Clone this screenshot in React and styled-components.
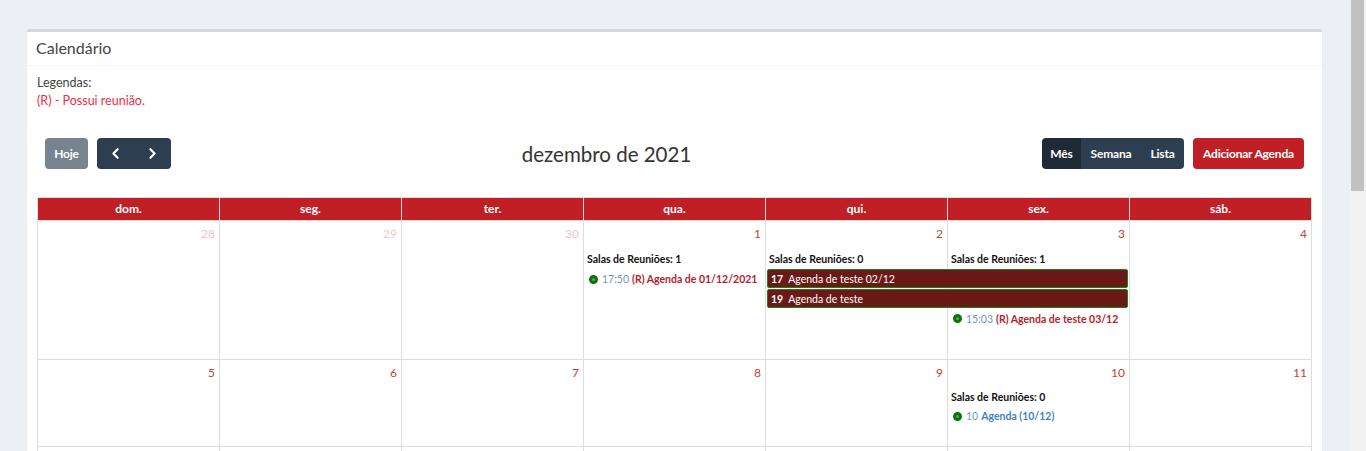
import React from "react";
import styled, { createGlobalStyle } from "styled-components";
import { ChevronLeft, ChevronRight } from "lucide-react";

const GlobalStyle = createGlobalStyle`
  * { box-sizing: border-box; }
  body {
    margin: 0;
    background: #ecf0f5;
    font-family: Lato, "Liberation Sans", sans-serif;
    color: #333;
    overflow: hidden;
  }
`;

const Page = styled.div`
  margin-right: 17px;
  padding: 29px 27px 340px;
`;

/* the window's scrollbar, drawn over the right edge */
const ScrollTrack = styled.div`
  position: fixed;
  top: 0;
  right: 0;
  width: 17px;
  height: 100vh;
  background: #f1f1f1;
  padding: 0 2px;
`;

const ScrollThumb = styled.div`
  height: 191px;
  background: #c1c1c1;
`;

const Card = styled.div`
  background: #fff;
  border-top: 3px solid #d2d6de;
  border-radius: 3px;
  box-shadow: 0 1px 1px rgba(0, 0, 0, 0.1);
`;

const CardHeader = styled.div`
  padding: 7px 9px 8px;
  border-bottom: 1px solid #f4f4f4;
  font-size: 16px;
  line-height: 18px;
  color: #444;
`;

const CardBody = styled.div`
  padding: 8px 10px 10px;
`;

const LegendLine = styled.div`
  font-size: 12.5px;
  line-height: 18px;
  color: ${(p) => p.color || "#444"};
`;

const Toolbar = styled.div`
  display: flex;
  justify-content: space-between;
  align-items: center;
  margin: 28px 8px 28px;
  height: 31px;
`;

const Chunk = styled.div`
  display: flex;
  gap: 9px;
  align-items: center;
`;

const Group = styled.div`
  display: flex;
  border-radius: 4px;
  overflow: hidden;
`;

const Button = styled.button`
  height: 31px;
  border: 0;
  padding: 0;
  background: ${(p) => p.$bg || "#2c3e50"};
  color: #fff;
  font-family: inherit;
  font-weight: 700;
  font-size: 12px;
  letter-spacing: -0.2px;
  white-space: nowrap;
  border-radius: ${(p) => (p.$grouped ? 0 : 4)}px;
  display: flex;
  align-items: center;
  justify-content: center;
  cursor: pointer;
  width: ${(p) => p.$w}px;
`;

const Title = styled.h2`
  margin: 0;
  font-size: 20.5px;
  font-weight: 400;
  color: #333;
`;

const Table = styled.div`
  border: 1px solid #ddd;
  border-right: 0;
`;

const HeadRow = styled.div`
  display: grid;
  grid-template-columns: repeat(7, 1fr);
  background: #c01f25;
`;

const HeadCell = styled.div`
  height: 23px;
  line-height: 22px;
  border-right: 1px solid #ddd;
  border-bottom: 1px solid #ddd;
  text-align: center;
  color: #fff;
  font-weight: 700;
  font-size: 12px;
`;

const Week = styled.div`
  display: grid;
  grid-template-columns: repeat(7, 1fr);
  grid-template-rows: ${(p) => p.$rows};
  min-height: ${(p) => p.$min}px;
  border-bottom: 1px solid #ddd;
`;

const DayCell = styled.div`
  grid-row: 1 / -1;
  grid-column: ${(p) => p.$col};
  border-right: 1px solid #ddd;
`;

const DayNumber = styled.div`
  grid-row: 1;
  grid-column: ${(p) => p.$col};
  text-align: right;
  padding: 5px 5px 0 0;
  font-size: 12px;
  color: ${(p) => (p.$other ? "#f2c3c3" : "#c4402f")};
`;

const Rooms = styled.div`
  grid-row: 2;
  grid-column: ${(p) => p.$col};
  padding-left: 3px;
  font-size: 10.5px;
  font-weight: 700;
  color: #111;
  align-self: center;
`;

const DotEvent = styled.div`
  grid-row: ${(p) => p.$row};
  grid-column: ${(p) => p.$col};
  display: flex;
  align-items: center;
  gap: 3px;
  padding-left: 5px;
  font-size: 10.5px;
  white-space: nowrap;
`;

const Dot = styled.span`
  width: 9px;
  height: 9px;
  border-radius: 50%;
  border: 3px solid #0b720b;
  background: #4fae4f;
  margin-right: 1px;
`;

const Time = styled.span`
  color: ${(p) => p.$color || "#7592bb"};
`;

const EventTitle = styled.span`
  font-weight: 700;
  color: ${(p) => p.$color || "#b5232b"};
`;

const Bar = styled.div`
  grid-row: ${(p) => p.$row};
  grid-column: ${(p) => p.$col};
  margin: 0 2px 1px 1px;
  height: 19px;
  display: flex;
  align-items: center;
  gap: 5px;
  padding: 0 3px;
  background: #6b1917;
  border: 1px solid #168516;
  border-radius: 2px;
  color: #fff;
  font-size: 10.5px;
  white-space: nowrap;
  b { font-weight: 700; }
`;

const dayNames = ["dom.", "seg.", "ter.", "qua.", "qui.", "sex.", "sáb."];

const weeks = [
  {
    rows: "27px 21px 20px 20px 19px 1fr",
    min: 139,
    days: [[28, true], [29, true], [30, true], [1], [2], [3], [4]],
    content: (
      <>
        <Rooms $col={4}>Salas de Reuniões: 1</Rooms>
        <DotEvent $col={4} $row={3}>
          <Dot />
          <Time>17:50</Time>
          <EventTitle>(R) Agenda de 01/12/2021</EventTitle>
        </DotEvent>
        <Rooms $col={5}>Salas de Reuniões: 0</Rooms>
        <Rooms $col={6}>Salas de Reuniões: 1</Rooms>
        <Bar $col="5 / 7" $row={3}>
          <b>17</b>
          <span>Agenda de teste 02/12</span>
        </Bar>
        <Bar $col="5 / 7" $row={4}>
          <b>19</b>
          <span>Agenda de teste</span>
        </Bar>
        <DotEvent $col={6} $row={5}>
          <Dot />
          <Time>15:03</Time>
          <EventTitle>(R) Agenda de teste 03/12</EventTitle>
        </DotEvent>
      </>
    ),
  },
  {
    rows: "27px 19px 20px 1fr",
    min: 87,
    days: [[5], [6], [7], [8], [9], [10], [11]],
    content: (
      <>
        <Rooms $col={6}>Salas de Reuniões: 0</Rooms>
        <DotEvent $col={6} $row={3}>
          <Dot />
          <Time $color="#6f9bcc">10</Time>
          <EventTitle $color="#3f82bf">Agenda (10/12)</EventTitle>
        </DotEvent>
      </>
    ),
  },
  { rows: "28px 1fr", min: 87, days: [[12], [13], [14], [15], [16], [17], [18]] },
  { rows: "28px 1fr", min: 87, days: [[19], [20], [21], [22], [23], [24], [25]] },
  { rows: "28px 1fr", min: 87, days: [[26], [27], [28], [29], [30], [31], [1, true]] },
];

export default function App() {
  return (
    <>
      <GlobalStyle />
      <Page>
        <Card>
          <CardHeader>Calendário</CardHeader>
          <CardBody>
            <LegendLine>Legendas:</LegendLine>
            <LegendLine color="#ef2d4a">(R) - Possui reunião.</LegendLine>
            <Toolbar>
              <Chunk>
                <Button $bg="#77838f" $w={43}>Hoje</Button>
                <Group>
                  <Button $grouped $w={37}>
                    <ChevronLeft size={17} strokeWidth={3} />
                  </Button>
                  <Button $grouped $w={37}>
                    <ChevronRight size={17} strokeWidth={3} />
                  </Button>
                </Group>
              </Chunk>
              <Title>dezembro de 2021</Title>
              <Chunk>
                <Group>
                  <Button $grouped $bg="#1e2b37" $w={39}>Mês</Button>
                  <Button $grouped $w={60}>Semana</Button>
                  <Button $grouped $w={43}>Lista</Button>
                </Group>
                <Button $bg="#c01f25" $w={111}>Adicionar Agenda</Button>
              </Chunk>
            </Toolbar>
            <Table>
              <HeadRow>
                {dayNames.map((d) => (
                  <HeadCell key={d}>{d}</HeadCell>
                ))}
              </HeadRow>
              {weeks.map((w, i) => (
                <Week key={i} $rows={w.rows} $min={w.min}>
                  {w.days.map(([n, other], c) => (
                    <DayCell key={"c" + c} $col={c + 1} />
                  ))}
                  {w.days.map(([n, other], c) => (
                    <DayNumber key={"n" + c} $col={c + 1} $other={other}>
                      {n}
                    </DayNumber>
                  ))}
                  {w.content}
                </Week>
              ))}
            </Table>
          </CardBody>
        </Card>
      </Page>
      <ScrollTrack>
        <ScrollThumb />
      </ScrollTrack>
    </>
  );
}
